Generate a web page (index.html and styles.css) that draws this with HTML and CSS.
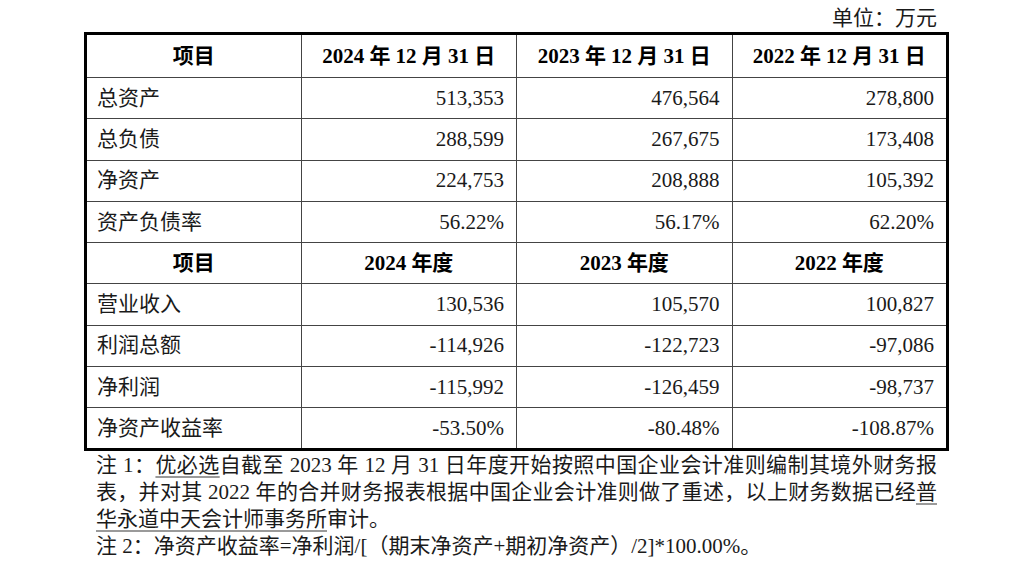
FILE: index.html
```html
<!DOCTYPE html>
<html lang="zh-CN">
<head>
<meta charset="utf-8">
<title>主要财务数据</title>
<link rel="stylesheet" href="styles.css">
</head>
<body>
<div class="page">
  <div class="unit">单位：万元</div>
  <table class="fin">
    <tr class="head first">
      <td>项目</td><td>2024 年 12 月 31 日</td><td>2023 年 12 月 31 日</td><td>2022 年 12 月 31 日</td>
    </tr>
    <tr><td>总资产</td><td>513,353</td><td>476,564</td><td>278,800</td></tr>
    <tr><td>总负债</td><td>288,599</td><td>267,675</td><td>173,408</td></tr>
    <tr><td>净资产</td><td>224,753</td><td>208,888</td><td>105,392</td></tr>
    <tr><td>资产负债率</td><td>56.22%</td><td>56.17%</td><td>62.20%</td></tr>
    <tr class="head">
      <td>项目</td><td>2024 年度</td><td>2023 年度</td><td>2022 年度</td>
    </tr>
    <tr><td>营业收入</td><td>130,536</td><td>105,570</td><td>100,827</td></tr>
    <tr><td>利润总额</td><td>-114,926</td><td>-122,723</td><td>-97,086</td></tr>
    <tr><td>净利润</td><td>-115,992</td><td>-126,459</td><td>-98,737</td></tr>
    <tr><td>净资产收益率</td><td>-53.50%</td><td>-80.48%</td><td>-108.87%</td></tr>
  </table>
  <div class="notes">
    <span class="line just">注 1：<span class="ul">优必选</span>自截至 2023 年 12 月 31 日年度开始按照中国企业会计准则编制其境外财务报</span>
    <span class="line just">表，并对其 2022 年的合并财务报表根据中国企业会计准则做了重述，以上财务数据已经<span class="ul">普</span></span>
    <span class="line"><span class="ul">华永道中天会计师事务所</span>审计。</span>
    <span class="line">注 2：净资产收益率=净利润/[（期末净资产+期初净资产）/2]*100.00%。</span>
  </div>
</div>
</body>
</html>
```
FILE: styles.css
```css
html, body {
  margin: 0;
  padding: 0;
  background: #fff;
}
body {
  font-family: "Liberation Serif", "Noto Sans CJK SC", serif;
  font-size: 21px;
  color: #1a1a1a;
  text-spacing-trim: space-all;
}
.page {
  margin-left: 84px;
  width: 865px;
}
.unit {
  text-align: right;
  padding-right: 12px;
  padding-top: 5px;
  height: 27px;
  line-height: 27px;
}
.fin {
  width: 865px;
  border-collapse: collapse;
  table-layout: fixed;
  border: 3px solid #000;
}
.fin td {
  width: 25%;
  height: 41.3px;
  box-sizing: border-box;
  border: 1px solid #444;
  padding: 0 12px 0 10px;
  text-align: right;
  vertical-align: middle;
  line-height: 1;
  white-space: nowrap;
}
.fin tr.first td {
  height: 44px;
}
.fin td:first-child {
  text-align: left;
}
.fin tr.head td {
  font-weight: bold;
  text-align: center;
  color: #000;
  padding: 0;
}
.notes {
  padding: 1px 12px 0 12px;
  line-height: 27.2px;
}
.line {
  display: block;
}
.line.just {
  text-align: justify;
  text-align-last: justify;
  text-justify: inter-character;
}
.ul {
  text-decoration: underline;
  text-decoration-color: #9a9a9a;
  text-decoration-thickness: 1.5px;
  text-underline-offset: 4px;
}
```
